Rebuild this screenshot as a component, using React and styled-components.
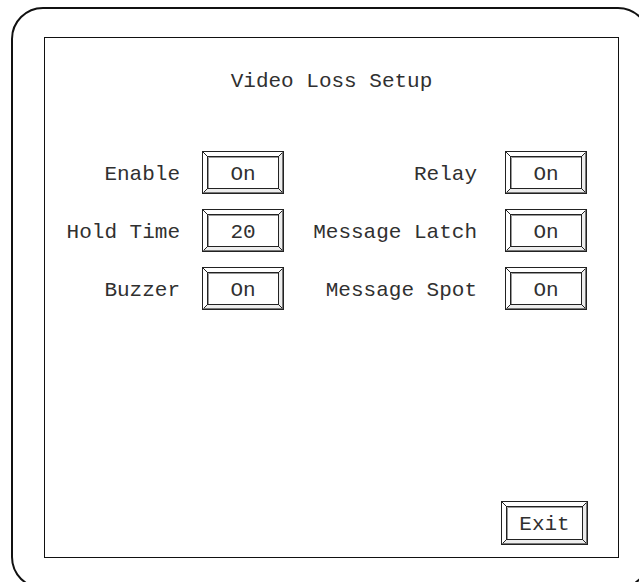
import React from "react";
import styled, { createGlobalStyle } from "styled-components";

const Global = createGlobalStyle`
  html, body {
    margin: 0;
    padding: 0;
    background: #ffffff;
    overflow: hidden;
  }
  body {
    font-family: "Courier New", "Nimbus Mono PS", FreeMono, "Liberation Mono", monospace;
    color: #303030;
  }
`;

const Frame = styled.div`
  box-sizing: border-box;
  margin: 7px 0 0 11px;
  width: 639px;
  height: 582px;
  border: 2px solid #111;
  border-radius: 32px;
  padding: 28px 0 0 31px;
`;

const Panel = styled.div`
  box-sizing: border-box;
  width: 575px;
  height: 521px;
  border: 1px solid #111;
  display: flex;
  flex-direction: column;
  padding-top: 32px;
`;

const Title = styled.div`
  font-size: 21px;
  line-height: 24px;
  text-align: center;
`;

const Grid = styled.div`
  margin-top: 57px;
  display: grid;
  grid-template-columns: 157px 82px 221px 82px;
  grid-auto-rows: 43px;
  row-gap: 15px;
`;

const Label = styled.div`
  display: flex;
  align-items: center;
  justify-content: flex-end;
  padding: 3px ${(p) => p.$pad}px 0 0;
  font-size: 21px;
  white-space: nowrap;
`;

const Box = styled.div`
  position: relative;
  width: ${(p) => p.$w}px;
  height: ${(p) => p.$h}px;
  display: flex;
  align-items: center;
  justify-content: center;
  padding-top: 3px;
  box-sizing: border-box;
  font-size: 21px;
  svg {
    position: absolute;
    left: 0;
    top: 0;
  }
  span {
    position: relative;
  }
`;

const Footer = styled.div`
  margin-top: auto;
  display: flex;
  justify-content: flex-end;
  padding: 0 30px 12px 0;
`;

function Bevel({ w, h }) {
  const i = 5;
  return (
    <svg width={w} height={h} viewBox={`0 0 ${w} ${h}`}>
      <polygon
        points={`0,${h} ${w},${h} ${w},0 ${w - i},${i} ${w - i},${h - i} ${i},${h - i}`}
        fill="#ededed"
      />
      <rect x="0.5" y="0.5" width={w - 1} height={h - 1} fill="none" stroke="#222" />
      <rect x={i + 0.5} y={i + 0.5} width={w - 2 * i - 1} height={h - 2 * i - 1} fill="#fff" stroke="#222" />
      <path
        d={`M0.5 0.5L${i + 0.5} ${i + 0.5}M${w - 0.5} 0.5L${w - i - 0.5} ${i + 0.5}M0.5 ${h - 0.5}L${i + 0.5} ${h - i - 0.5}M${w - 0.5} ${h - 0.5}L${w - i - 0.5} ${h - i - 0.5}`}
        stroke="#222"
      />
      <path d={`M${w - 1.5} 1V${h - 1.5}H1`} fill="none" stroke="#777" />
      <path d={`M${i + 1.5} ${h - i - 1}V${i + 1.5}H${w - i - 1}`} fill="none" stroke="#999" />
    </svg>
  );
}

function Field({ value, w = 82, h = 43 }) {
  return (
    <Box $w={w} $h={h}>
      <Bevel w={w} h={h} />
      <span>{value}</span>
    </Box>
  );
}

const rows = [
  ["Enable", "On", "Relay", "On"],
  ["Hold Time", "20", "Message Latch", "On"],
  ["Buzzer", "On", "Message Spot", "On"],
];

export default function App() {
  return (
    <>
      <Global />
      <Frame>
        <Panel>
          <Title>Video Loss Setup</Title>
          <Grid>
            {rows.map(([l1, v1, l2, v2]) => (
              <React.Fragment key={l1}>
                <Label $pad={22}>{l1}</Label>
                <Field value={v1} />
                <Label $pad={28}>{l2}</Label>
                <Field value={v2} />
              </React.Fragment>
            ))}
          </Grid>
          <Footer>
            <Field value="Exit" w={87} h={44} />
          </Footer>
        </Panel>
      </Frame>
    </>
  );
}
